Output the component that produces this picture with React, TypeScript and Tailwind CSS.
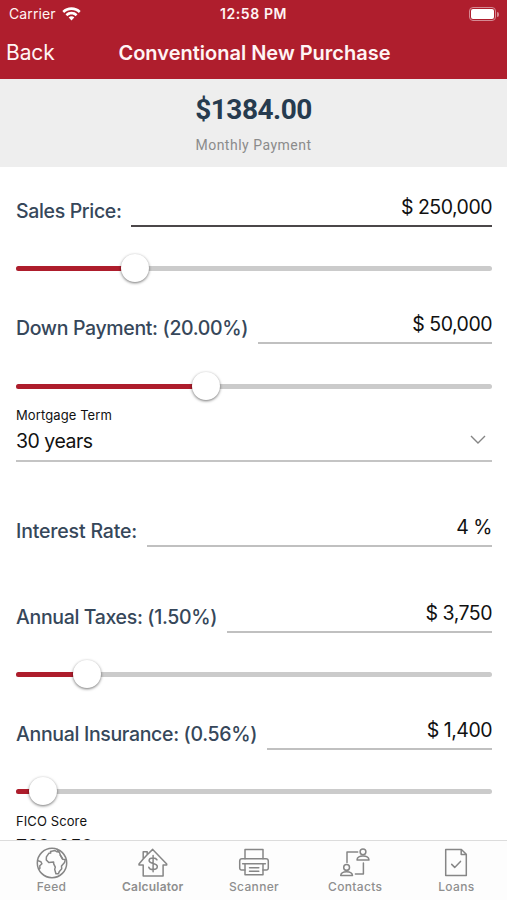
import type { ReactNode } from "react";

type FieldProps = {
  label: string;
  value: string;
  labelClass: string;
  className?: string;
  active?: boolean;
};

function Field({ label, value, labelClass, className = "", active = false }: FieldProps) {
  return (
    <div className={`flex h-10 shrink-0 ${className}`}>
      <label className={`shrink-0 whitespace-nowrap pt-[10px] text-[19.5px] font-medium leading-7 text-[#36475a] ${labelClass}`}>
        {label}
      </label>
      <div
        className={`flex-1 border-b-2 pt-[6px] text-right text-[19.5px] leading-7 tracking-[-0.5px] text-[#111] ${
          active ? "border-[#4b4749]" : "border-[#c0c0c0]"
        }`}
      >
        {value}
      </div>
    </div>
  );
}

function Slider({ position, className = "" }: { position: number; className?: string }) {
  return (
    <div className={`relative flex h-7 shrink-0 items-center ${className}`}>
      <div className="h-[5px] w-full overflow-hidden rounded-full bg-[#cbcbcb]">
        <div className="h-full bg-[#ae1d2c]" style={{ width: `${position}%` }} />
      </div>
      <div
        className="absolute top-0 size-7 -translate-x-1/2 rounded-full bg-white shadow-[0_1px_3px_rgba(0,0,0,0.55)]"
        style={{ left: `${position}%` }}
      />
    </div>
  );
}

function Icon({ children }: { children: ReactNode }) {
  return (
    <svg
      viewBox="0 0 32 32"
      className="size-8"
      fill="none"
      stroke="#868686"
      strokeWidth="1.5"
      strokeLinejoin="round"
      strokeLinecap="round"
    >
      {children}
    </svg>
  );
}

const tabs = [
  {
    name: "Feed",
    icon: (
      <>
        <circle cx="16" cy="16" r="14.7" />
        <path d="M14.5 4.5 19 3.6l2 1.2 2.4.3.9 3 2.2 4.1 2.8.2-.8 3.2-3 3.4.2 2.8-2.3 2.6-1 2.3-2.5.1-1.2-4.4.6-2.3-1.6-3.3-.1-1.7-4.8.5-2.5-2.7.1-3.1 2.4-3.5 2-.4Z" />
        <path d="m1.8 13.6 3.1 1.1 1 2.1-2.1 2 .1 2.6-.7.6" />
        <path d="M21 2.2 22.8 4.8M24.3 8.1l2.2 3.4" />
      </>
    ),
  },
  {
    name: "Calculator",
    icon: (
      <>
        <path d="M6.200 12V4.700h4v3.100l5.500-5.400 14 14.600v1h-3.600v11H6.200V18H2v-1l4.200-4.900 4-4.300" />
        <path d="M20 12.900c-.6-1.400-2-2-4-2-2.300 0-3.900 1-3.900 2.700 0 4 8.200 1.800 8.200 6 0 1.800-1.800 3-4.200 3-2.300 0-3.800-.8-4.300-2.400M16.100 8.600v16.200" />
      </>
    ),
  },
  {
    name: "Scanner",
    icon: (
      <>
        <path d="M7 11.800V2.500h18v9.300" />
        <path d="M7 23H3.600A1.900 1.900 0 0 1 1.700 21v-7a2.300 2.300 0 0 1 2.300-2.200h24a2.300 2.300 0 0 1 2.300 2.200v7a1.900 1.900 0 0 1-1.900 2H25" />
        <path d="M7 16.800h18v11H7ZM4.600 16.800h22.800M11.500 20.700h9.300M11.500 24.200h9.300" />
      </>
    ),
  },
  {
    name: "Contacts",
    icon: (
      <>
        <circle cx="24" cy="4.800" r="2.900" />
        <path d="M18 13c.2-2.500 2.500-3.900 6-3.900s5.800 1.400 6 3.900Z" />
        <circle cx="7.600" cy="20.400" r="2.900" />
        <path d="M1.700 28.600c.2-2.500 2.400-3.900 5.900-3.900s5.700 1.400 5.900 3.900Z" />
        <path d="M18.700 4.900H8v10.600M24.400 16v11h-8" />
      </>
    ),
  },
  {
    name: "Loans",
    icon: (
      <>
        <path d="M5.700 2.500h15.700l4.900 4.800v21.200H5.700ZM21.200 2.800v4.700h4.900" />
        <path d="m11.700 17.400 3 3 5.800-6" />
      </>
    ),
  },
];

export default function App() {
  return (
    <div className="flex h-[900px] w-[507px] flex-col overflow-hidden bg-white font-['Inter','Liberation_Sans',sans-serif]">
      <header className="h-[79px] shrink-0 bg-[#af1e2d] text-[#fff4f4]">
        <div className="grid h-7 grid-cols-[1fr_100px_1fr] items-center px-2 text-[14px] leading-7">
          <div className="flex items-center gap-[6px] pl-px">
            <span className="tracking-[0.1px]">Carrier</span>
            <svg viewBox="0 0 20 15" className="mb-px h-[14px] w-[19px]" fill="white">
              <path d="M10 .4C6.200.4 2.800 1.800.2 4.300l1.900 2C4.200 4.300 7 3.200 10 3.200s5.800 1.100 7.900 3.100l1.900-2C17.200 1.800 13.800.4 10 .4Z" />
              <path d="M10 5.200c-2.500 0-4.700.9-6.400 2.600l1.900 2C6.700 8.600 8.300 8 10 8s3.300.6 4.500 1.800l1.900-2C14.700 6.100 12.500 5.200 10 5.200Z" />
              <path d="M10 10c-1.200 0-2.200.5-3 1.300l3 3.200 3-3.200c-.8-.8-1.800-1.300-3-1.300Z" />
            </svg>
          </div>
          <div className="text-center font-semibold tracking-[0.6px]">12:58 PM</div>
          <div className="flex items-center justify-end gap-px">
            <div className="h-[14px] w-[27px] rounded-[4px] border border-[#d58a93] p-px">
              <div className="h-full rounded-[2px] bg-white" />
            </div>
            <div className="h-[5px] w-[2px] rounded-r-full bg-[#d58a93]" />
          </div>
        </div>
        <div className="grid grid-cols-[100px_1fr_98px] items-center pt-[10px] leading-[30px]">
          <span className="pl-[6px] text-[21px] tracking-[-0.1px]">Back</span>
          <h1 className="whitespace-nowrap text-center text-[20px] font-semibold">Conventional New Purchase</h1>
        </div>
      </header>

      <section className="flex h-[88px] shrink-0 flex-col items-center bg-[#eee] pt-[15px] font-['Roboto',sans-serif]">
        <div className="text-[28px] font-bold leading-8 tracking-[-0.5px] text-[#263b4f]">$1384.00</div>
        <div className="mt-[9px] text-[14px] leading-5 tracking-[0.5px] text-[#8b8b8b]">Monthly Payment</div>
      </section>

      <main className="flex min-h-0 flex-1 flex-col overflow-hidden pl-4 pr-[15px] pt-5">
        <Field label="Sales Price:" value="$ 250,000" labelClass="w-[115px] tracking-[-0.34px]" active />
        <Slider position={25} className="mt-[27px]" />
        <Field
          label="Down Payment: (20.00%)"
          value="$ 50,000"
          labelClass="w-[242px] tracking-[-0.34px]"
          className="mt-[22px]"
        />
        <Slider position={40} className="mt-[28px]" />

        <div className="mt-[5px] flex h-[57px] shrink-0 flex-col border-b-2 border-[#c4c4c4]">
          <span className="text-[13px] leading-5 tracking-[0.1px] text-[#111]">Mortgage Term</span>
          <div className="flex items-center justify-between pr-[6px]">
            <span className="text-[19.5px] leading-8 tracking-[-0.5px] text-[#111]">30 years</span>
            <svg viewBox="0 0 16 9" className="mb-1 h-[9px] w-4" fill="none" stroke="#858585" strokeWidth="1.4">
              <path d="m1 1 7 7 7-7" />
            </svg>
          </div>
        </div>

        <Field label="Interest Rate:" value="4 %" labelClass="w-[131px] tracking-[-0.17px]" className="mt-[45px]" />
        <Field
          label="Annual Taxes: (1.50%)"
          value="$ 3,750"
          labelClass="w-[211px] tracking-[-0.34px]"
          className="mt-[46px]"
        />
        <Slider position={15} className="mt-[27px]" />
        <Field
          label="Annual Insurance: (0.56%)"
          value="$ 1,400"
          labelClass="w-[251px] tracking-[-0.33px]"
          className="mt-[22px]"
        />
        <Slider position={5.6} className="mt-[27px]" />
        <div className="mt-[6px] shrink-0">
          <div className="text-[13px] leading-5 tracking-[0.1px] text-[#111]">FICO Score</div>
          <div className="text-[19.5px] leading-8 tracking-[-0.5px] text-[#111]">760-850</div>
        </div>
      </main>

      <nav className="flex h-[60px] shrink-0 border-t border-[#dcdcdc] bg-[#fdfdfd] pl-px pt-[6px]">
        {tabs.map(({ name, icon }) => (
          <div key={name} className="flex flex-1 flex-col items-center">
            <Icon>{icon}</Icon>
            <span
              className={`text-[12px] leading-4 text-[#8f8f8f] ${
                name === "Calculator" ? "font-semibold tracking-[0.2px]" : "font-medium tracking-[0.35px]"
              }`}
            >
              {name}
            </span>
          </div>
        ))}
      </nav>
    </div>
  );
}
